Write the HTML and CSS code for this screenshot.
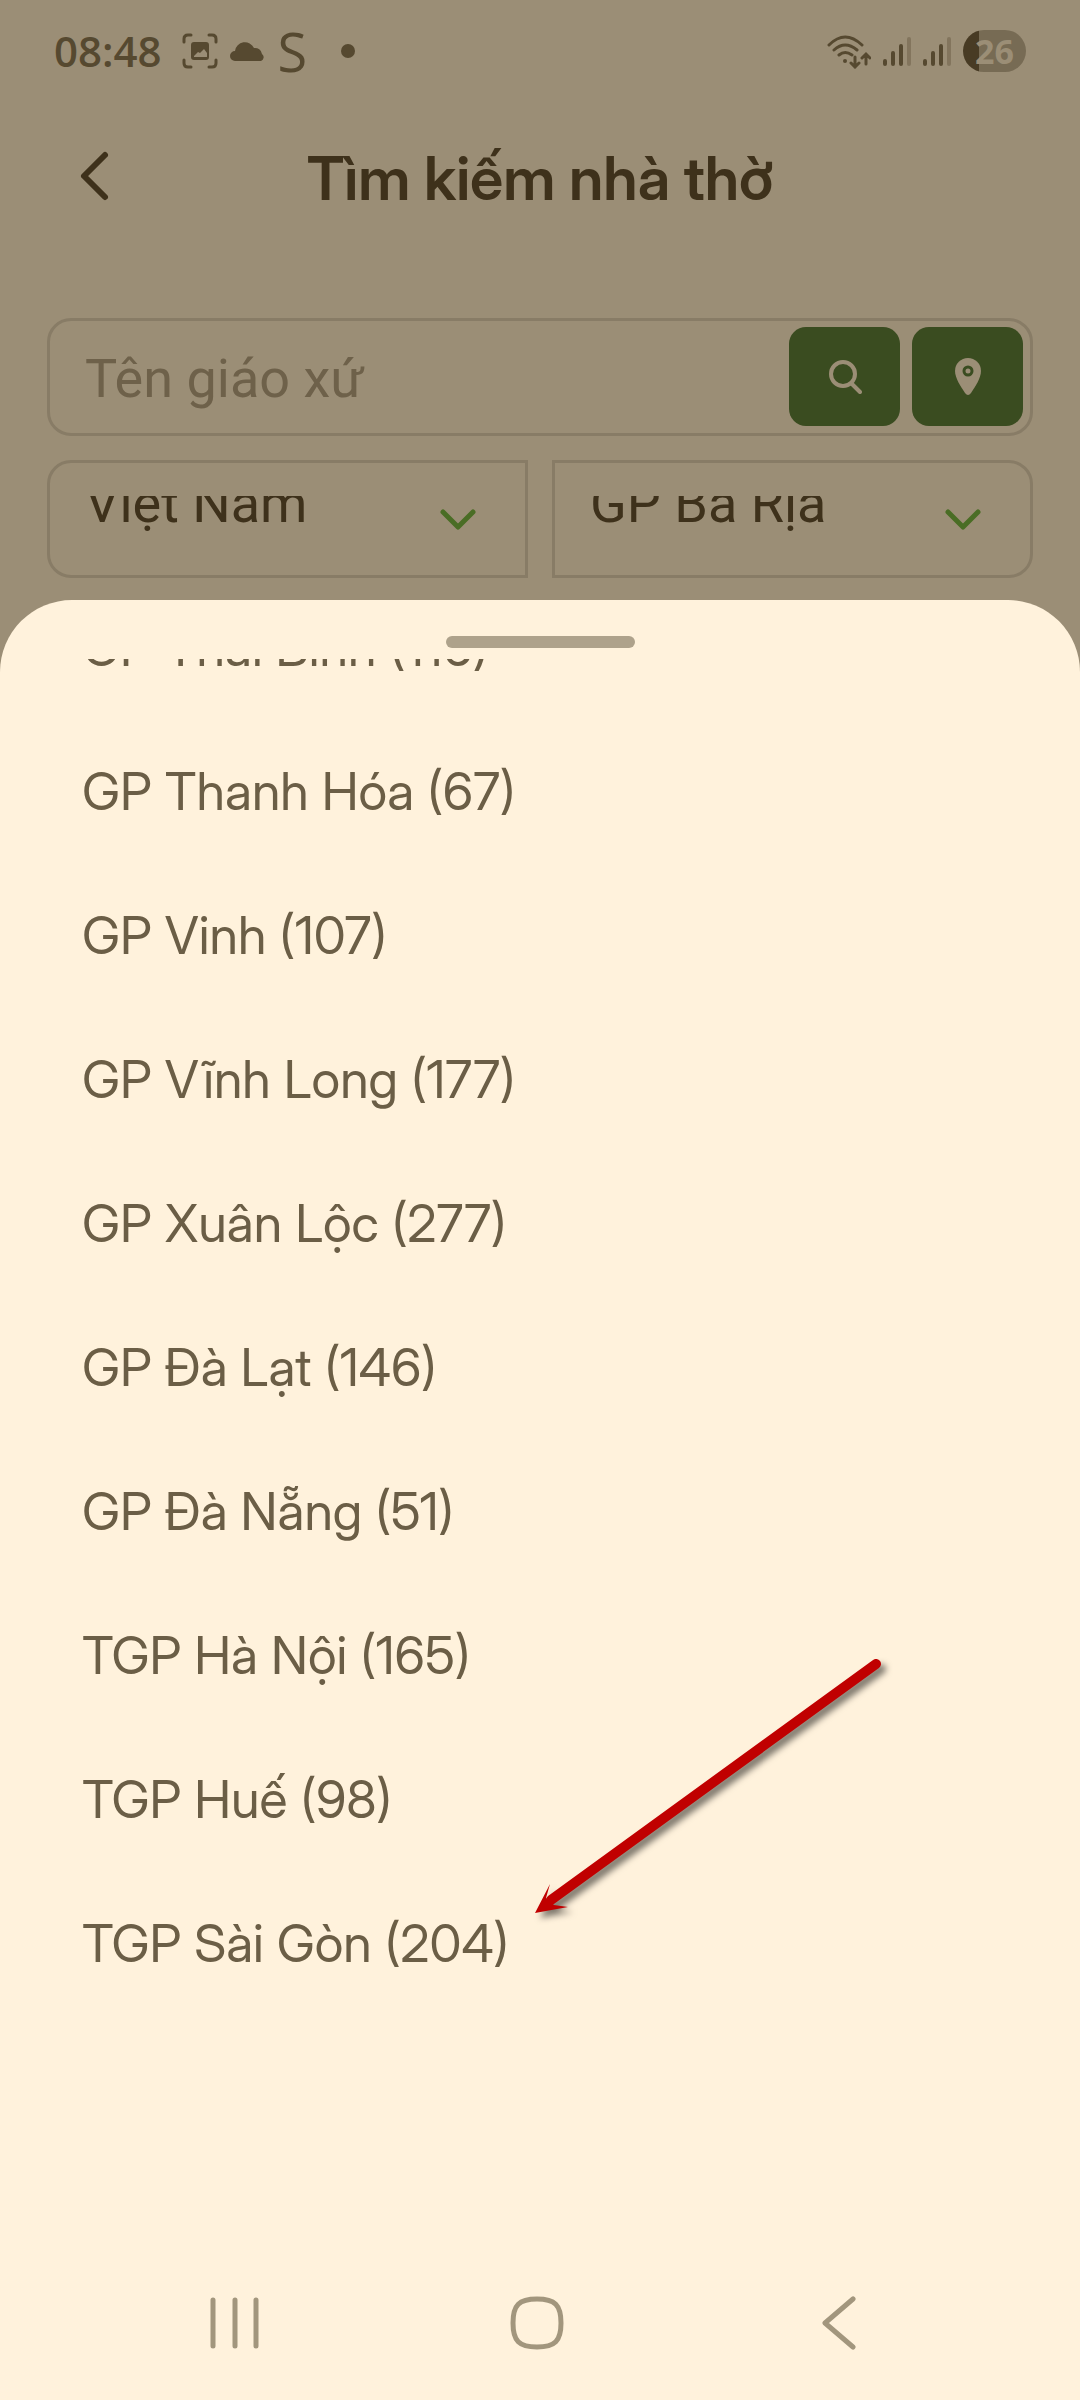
FILE: index.html
```html
<!DOCTYPE html>
<html lang="vi">
<head>
<meta charset="utf-8">
<meta name="viewport" content="width=device-width, initial-scale=1">
<title>Tìm kiếm nhà thờ</title>
<link rel="stylesheet" href="styles.css">
</head>
<body>
<div class="status">
  <span class="time">08:48</span>
  <div class="status-left">
    <svg width="36" height="36" viewBox="0 0 36 36" fill="none" stroke="currentColor" stroke-width="3" stroke-linecap="round" aria-hidden="true"><path d="M2 9V6q0-4 4-4h3M27 2h3q4 0 4 4v3M34 27v3q0 4-4 4h-3M9 34H6q-4 0-4-4v-3"/><path fill="currentColor" stroke="none" fill-rule="evenodd" d="M12 9h12q3 0 3 3v12q0 3-3 3H12q-3 0-3-3V12q0-3 3-3zM12 24h13v-4l-3-4-4 4-2-1-4 4z"/></svg>
    <svg width="36" height="20" viewBox="0 0 36 20" fill="currentColor" aria-hidden="true"><path d="M5 20a5 5 0 0 1 0-10A10 10 0 0 1 24 7a7 7 0 0 1 8 6 4 4 0 0 1-1 7z"/></svg>
    <span class="s-mark">S</span>
    <span class="dot"></span>
  </div>
  <div class="status-right">
    <svg width="44" height="36" viewBox="0 0 44 36" fill="none" stroke="currentColor" stroke-width="3" stroke-linecap="round" aria-hidden="true"><path d="M2 12Q18-4 35 12M7 17q11-10 23 0M12 22q6-5 13 0M28 24v10M24 30l4 4 4-4M39 31V21M35 25l4-4 4 4"/><circle cx="18" cy="28" r="2" fill="currentColor" stroke="none"/></svg>
    <svg width="28" height="30" viewBox="0 0 28 30" fill="none" stroke="currentColor" stroke-width="4" stroke-linecap="round" aria-hidden="true"><path d="M2 25v3M10 17v11M18 10v18"/><path opacity=".35" d="M26 3v25"/></svg>
    <svg width="28" height="30" viewBox="0 0 28 30" fill="none" stroke="currentColor" stroke-width="4" stroke-linecap="round" aria-hidden="true"><path d="M2 25v3M10 17v11M18 10v18"/><path opacity=".35" d="M26 3v25"/></svg>
    <span class="battery">26</span>
  </div>
</div>

<header class="header">
  <button class="back" type="button" aria-label="Quay lại"><svg width="32" height="52" viewBox="0 0 32 52" fill="none" stroke="currentColor" stroke-width="6" stroke-linecap="round" stroke-linejoin="round"><path d="M27 5 6 26l21 21"/></svg></button>
  <h1>Tìm kiếm nhà thờ</h1>
</header>

<form class="filters">
  <div class="search">
    <input class="search-input" type="text" placeholder="Tên giáo xứ" aria-label="Tên giáo xứ">
    <button class="action" type="button" aria-label="Tìm"><svg width="34" height="36" viewBox="0 0 34 36" fill="none" stroke="currentColor" stroke-width="4" stroke-linecap="round"><circle cx="15" cy="15" r="12"/><path d="m24 25 8 8"/></svg></button>
    <button class="action" type="button" aria-label="Vị trí"><svg width="26" height="37" viewBox="0 0 26 37"><path fill="currentColor" d="M13 0a13 13 0 0 1 13 13c0 7-6 16-10 22q-3 4-6 0C6 29 0 20 0 13A13 13 0 0 1 13 0z"/><circle cx="13" cy="13" r="4" fill="none" stroke="#3a4c20" stroke-width="3"/></svg></button>
  </div>
  <div class="pickers">
    <label class="picker picker-first">
      <span class="clip"><select class="select" aria-label="Quốc gia"><option>Việt Nam</option></select></span>
      <svg class="chevron" width="36" height="22" viewBox="0 0 36 22" fill="none" stroke="currentColor" stroke-width="5" stroke-linecap="round" stroke-linejoin="round" aria-hidden="true"><path d="m3 3 15 15L33 3"/></svg>
    </label>
    <label class="picker picker-last">
      <span class="clip"><select class="select" aria-label="Giáo phận"><option>GP Bà Rịa</option></select></span>
      <svg class="chevron" width="36" height="22" viewBox="0 0 36 22" fill="none" stroke="currentColor" stroke-width="5" stroke-linecap="round" stroke-linejoin="round" aria-hidden="true"><path d="m3 3 15 15L33 3"/></svg>
    </label>
  </div>
</form>

<main class="sheet">
  <div class="handle"></div>
  <ul class="list">
    <li><button class="item" type="button">GP Thái Bình (116)</button></li>
    <li><button class="item" type="button">GP Thanh Hóa (67)</button></li>
    <li><button class="item" type="button">GP Vinh (107)</button></li>
    <li><button class="item" type="button">GP Vĩnh Long (177)</button></li>
    <li><button class="item" type="button">GP Xuân Lộc (277)</button></li>
    <li><button class="item" type="button">GP Đà Lạt (146)</button></li>
    <li><button class="item" type="button">GP Đà Nẵng (51)</button></li>
    <li><button class="item" type="button">TGP Hà Nội (165)</button></li>
    <li><button class="item" type="button">TGP Huế (98)</button></li>
    <li><button class="item" type="button">TGP Sài Gòn (204)</button></li>
  </ul>
  <svg class="arrow" width="370" height="280" viewBox="0 0 370 280" aria-hidden="true"><path d="M21 250 346 14" fill="none" stroke="#c00000" stroke-width="10" stroke-linecap="round"/><path fill="#c00000" d="M5 263 20 234 16 248 24 255 38 257z"/></svg>
  <nav class="nav" aria-label="Điều hướng">
    <button type="button" aria-label="Gần đây"><svg width="50" height="54" viewBox="0 0 50 54" fill="none" stroke="currentColor" stroke-width="5" stroke-linecap="round"><path d="M3 4v46M25 4v46M46 4v46"/></svg></button>
    <button type="button" aria-label="Màn hình chính"><svg width="54" height="54" viewBox="0 0 54 54" fill="none" stroke="currentColor" stroke-width="5"><path d="M27 3C45 3 51 9 51 27S45 51 27 51 3 45 3 27 9 3 27 3z"/></svg></button>
    <button type="button" aria-label="Trở về"><svg width="34" height="54" viewBox="0 0 34 54" fill="none" stroke="currentColor" stroke-width="5" stroke-linecap="round" stroke-linejoin="round"><path d="M31 3 3 27l28 24"/></svg></button>
  </nav>
</main>
</body>
</html>
```
FILE: styles.css
```css
* { box-sizing: border-box; }

body {
  margin: 0;
  min-height: 100vh;
  display: flex;
  flex-direction: column;
  background: #9b8e76;
  color: #3e311b;
  font-family: "Inter Display", Inter, "Liberation Sans", sans-serif;
}

button {
  border: 0;
  padding: 0;
  background: none;
  color: inherit;
  font: inherit;
}

svg { display: block; }

/* Status bar */
.status {
  height: 102px;
  padding: 0 54px;
  display: flex;
  align-items: center;
  color: #564930;
}

.time {
  font: 600 42px/48px "Open Sans", sans-serif;
}

.status-left {
  display: flex;
  align-items: center;
  gap: 12px;
  margin-left: 20px;
}

.s-mark {
  font: 500 54px/48px "Open Sans", sans-serif;
}

.dot {
  width: 14px;
  height: 14px;
  margin-left: 22px;
  border-radius: 50%;
  background: currentColor;
}

.status-right {
  display: flex;
  align-items: center;
  gap: 12px;
  margin-left: auto;
}

.battery {
  width: 63px;
  height: 42px;
  border-radius: 21px;
  background: linear-gradient(to right, #483b24 16px, #776b54 16px);
  color: #9b8e76;
  font: 700 34px/42px "Open Sans", sans-serif;
  text-align: center;
}

/* Title row */
.header {
  height: 152px;
  padding: 0 78px;
  display: grid;
  grid-template-columns: 32px 1fr 32px;
}

.back {
  height: 52px;
  margin-top: 48px;
}

h1 {
  margin: 40px 0 0;
  font-size: 60px;
  line-height: 72px;
  font-weight: 600;
  text-align: center;
  white-space: nowrap;
}

/* Search and filters */
.filters {
  padding: 64px 47px 22px;
  display: flex;
  flex-direction: column;
  gap: 24px;
}

.search {
  height: 118px;
  padding: 6px 7px 6px 35px;
  display: flex;
  gap: 12px;
  border: 3px solid #887c66;
  border-radius: 24px;
}

.search-input {
  flex: 1;
  min-width: 0;
  height: 102px;
  padding: 0;
  border: 0;
  outline: 0;
  background: none;
  color: #3e311b;
  font: 400 54px/64px Roboto, sans-serif;
}

.search-input::placeholder { color: #6e614a; opacity: 1; }

.action {
  width: 111px;
  height: 99px;
  display: grid;
  place-items: center;
  border-radius: 17px;
  background: #3a4c20;
  color: #9b8e76;
}

.pickers {
  display: grid;
  grid-template-columns: 1fr 1fr;
  gap: 24px;
}

.picker {
  height: 118px;
  padding: 33px 49px 31px 35px;
  display: flex;
  align-items: center;
  border: 3px solid #887c66;
}

.picker-first { border-radius: 24px 0 0 24px; }
.picker-last { border-radius: 0 24px 24px 0; }

.clip {
  flex: 1;
  height: 48px;
  overflow: hidden;
}

.select {
  width: 100%;
  height: 64px;
  margin-top: -24px;
  padding: 0;
  appearance: none;
  border: 0;
  background: none;
  color: #3e311b;
  font: 400 54px/64px Roboto, sans-serif;
}

.chevron { color: #4a6d25; }

/* Bottom sheet */
.sheet {
  position: relative;
  flex: 1;
  display: flex;
  flex-direction: column;
  border-radius: 72px 72px 0 0;
  background: #fff2dc;
}

.handle {
  width: 189px;
  height: 12px;
  margin: 36px auto 11px;
  border-radius: 6px;
  background: #aea28b;
}

.list {
  margin: 0;
  padding: 0;
  overflow: hidden;
  list-style: none;
}

.list li:first-child { margin-top: -83px; }

.item {
  width: 100%;
  height: 144px;
  padding: 0 82px;
  display: block;
  color: #6b5e46;
  font-size: 52px;
  line-height: 64px;
  text-align: left;
}

.arrow {
  position: absolute;
  left: 530px;
  top: 1050px;
  filter: drop-shadow(5px 5px 3px rgba(0, 0, 0, .5));
}

/* System navigation */
.nav {
  height: 154px;
  margin-top: auto;
  padding: 0 90px 0 84px;
  display: grid;
  grid-template-columns: repeat(3, 1fr);
  align-items: center;
  color: #a2967d;
}

.nav button { display: grid; place-items: center; }
```
